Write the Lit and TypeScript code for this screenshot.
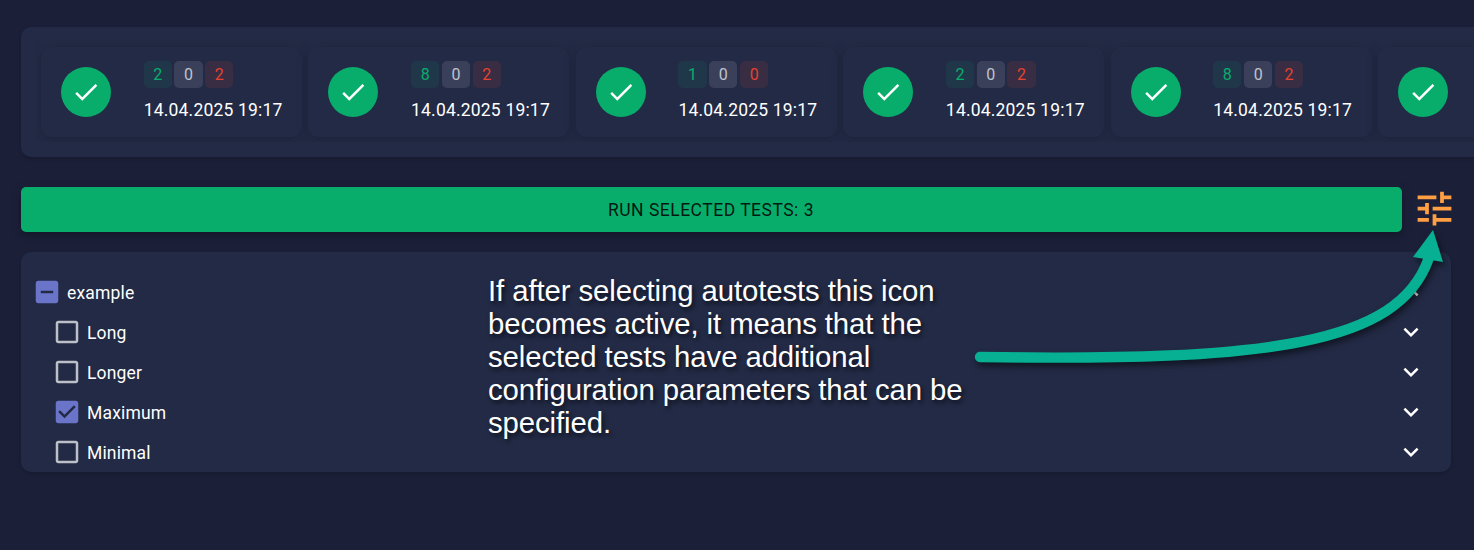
import { LitElement, html, css, svg, nothing } from "lit";
import { customElement, property } from "lit/decorators.js";

const runs: number[][] = [
  [2, 0, 2],
  [8, 0, 2],
  [1, 0, 0],
  [2, 0, 2],
  [8, 0, 2],
  [],
];
const DATE = "14.04.2025 19:17";

const ICONS = {
  done: "M9 16.17 4.83 12l-1.42 1.41L9 19 21 7l-1.41-1.41z",
  tune: "M3 17v2h6v-2H3zM3 5v2h10V5H3zm10 16v-2h8v-2h-8v-2h-2v6h2zM7 9v2H3v2h4v2h2V9H7zm14 4v-2H11v2h10zm-6-4h2V7h4V5h-4V3h-2v6z",
  more: "M16.59 8.59 12 13.17 7.41 8.59 6 10l6 6 6-6z",
  less: "m12 8-6 6 1.41 1.41L12 10.83l4.59 4.58L18 14z",
  empty: "M19 5v14H5V5h14m0-2H5c-1.1 0-2 .9-2 2v14c0 1.1.9 2 2 2h14c1.1 0 2-.9 2-2V5c0-1.1-.9-2-2-2z",
  checked: "M19 3H5c-1.11 0-2 .9-2 2v14c0 1.1.89 2 2 2h14c1.11 0 2-.9 2-2V5c0-1.1-.89-2-2-2zm-9 14l-5-5 1.41-1.41L10 14.17l7.59-7.59L19 8l-9 9z",
  mixed: "M19 3H5c-1.1 0-2 .9-2 2v14c0 1.1.9 2 2 2h14c1.1 0 2-.9 2-2V5c0-1.1-.9-2-2-2zm-2 10H7v-2h10v2z",
};
const icon = (name: keyof typeof ICONS) =>
  html`<svg class="icon" viewBox="0 0 24 24">${svg`<path d=${ICONS[name]} />`}</svg>`;

@customElement("run-card")
class RunCard extends LitElement {
  @property({ attribute: false }) counts: number[] = [];
  static styles = css`
    :host {
      display: flex;
      flex: none;
      box-sizing: border-box;
      width: 261px;
      height: 90px;
      padding: 0 15px 0 20px;
      align-items: center;
      gap: 32.7px;
      border-radius: 10px;
      background: #222a45;
      box-shadow: 0 4px 6px rgba(0, 0, 0, 0.05), 0 1px 15px rgba(0, 0, 0, 0.08);
    }
    .status {
      display: grid;
      flex: none;
      place-items: center;
      width: 50px;
      height: 50px;
      border-radius: 50%;
      background: #08ad6c;
    }
    .icon {
      display: block;
      width: 30px;
      height: 30px;
      fill: #fff;
    }
    .info {
      display: flex;
      flex-direction: column;
      gap: 10px;
      padding-bottom: 1px;
    }
    .tags {
      display: flex;
      gap: 2.6px;
    }
    .tag {
      width: 28.2px;
      height: 27px;
      border-radius: 5px;
      text-align: center;
      font-size: 16px;
      line-height: 28px;
    }
    .ok {
      color: #08ad6c;
      background: #20374a;
    }
    .skip {
      color: #c0c3cd;
      background: #3b405a;
    }
    .fail {
      color: #e5432f;
      background: #382d43;
    }
    .date {
      font-size: 17.5px;
      line-height: 25px;
      letter-spacing: 0.01071em;
      white-space: nowrap;
    }
  `;
  render() {
    const [ok, skip, fail] = this.counts;
    return html`
      <div class="status">${icon("done")}</div>
      ${this.counts.length
        ? html`<div class="info">
            <div class="tags">
              <span class="tag ok">${ok}</span>
              <span class="tag skip">${skip}</span>
              <span class="tag fail">${fail}</span>
            </div>
            <div class="date">${DATE}</div>
          </div>`
        : nothing}
    `;
  }
}

@customElement("tree-row")
class TreeRow extends LitElement {
  @property() state: "empty" | "checked" | "mixed" = "empty";
  @property() label = "";
  @property({ type: Boolean }) expanded = false;
  static styles = css`
    :host {
      display: flex;
      align-items: center;
      height: 40px;
      font-size: 17.5px;
    }
    .icon {
      display: block;
      width: 30px;
      height: 30px;
      fill: currentColor;
    }
    .box {
      color: #bdc0c9;
    }
    .box.on {
      color: #6a75c9;
    }
    .label {
      flex: 1;
      padding: 2px 0 0 5px;
      letter-spacing: 0.00938em;
    }
  `;
  render() {
    return html`
      <span class="box ${this.state === "empty" ? "" : "on"}">${icon(this.state)}</span>
      <span class="label">${this.label}</span>
      <span>${icon(this.expanded ? "less" : "more")}</span>
    `;
  }
}

@customElement("app-root")
class AppRoot extends LitElement {
  static styles = css`
    :host {
      display: flex;
      flex-direction: column;
      position: relative;
      box-sizing: border-box;
      height: 550px;
      padding: 27px 0 0 21px;
      overflow: hidden;
      background: #1b1f38;
      color: #fff;
      font-family: Roboto, sans-serif;
    }
    .history {
      box-sizing: border-box;
      height: 130px;
      padding: 15px 0 15px 15px;
      border-radius: 10px 0 0 10px;
      background: #222a45;
      box-shadow: 0 2px 4px rgba(0, 0, 0, 0.15);
    }
    .strip {
      display: flex;
      gap: 6.4px;
      padding: 5px;
      overflow: hidden;
    }
    .actions {
      display: flex;
      align-items: center;
      gap: 9.5px;
      margin-top: 30px;
      height: 45px;
    }
    .run {
      width: 1381px;
      height: 45px;
      padding: 0 1px 0 0;
      border: 0;
      border-radius: 5px;
      background: #08ad6c;
      color: rgba(0, 0, 0, 0.87);
      font: 400 17.5px Roboto, sans-serif;
      letter-spacing: 0.02857em;
      box-shadow: 0 4px 5px rgba(0, 0, 0, 0.14), 0 2px 12px rgba(0, 0, 0, 0.12);
    }
    .tune {
      padding-bottom: 1.5px;
    }
    .tune .icon {
      display: block;
      width: 45px;
      height: 45px;
      fill: #ff9e43;
    }
    .tree {
      box-sizing: border-box;
      width: 1430px;
      height: 220px;
      margin-top: 20px;
      padding: 20px 25px 0 11px;
      border-radius: 10px;
      background: #222a45;
      box-shadow: 0 2px 4px rgba(0, 0, 0, 0.15);
    }
    .children {
      padding-left: 20px;
    }
    .note {
      position: absolute;
      left: 488px;
      top: 274px;
      margin: 0;
      font: 29.33px/33px "Liberation Sans", Arial, sans-serif;
      letter-spacing: -0.09px;
      white-space: nowrap;
      text-shadow: 2px 3px 4px rgba(0, 0, 0, 0.6);
    }
    .arrow {
      position: absolute;
      left: 960px;
      top: 220px;
      width: 514px;
      height: 170px;
      filter: drop-shadow(2px 4px 3px rgba(0, 0, 0, 0.5));
    }
    .shaft {
      fill: none;
      stroke: #07b092;
      stroke-width: 10.4;
      stroke-linecap: round;
    }
    .head {
      fill: #07b092;
    }
  `;
  render() {
    return html`
      <section class="history">
        <div class="strip">${runs.map((r) => html`<run-card .counts=${r}></run-card>`)}</div>
      </section>
      <div class="actions">
        <button class="run">RUN SELECTED TESTS: 3</button>
        <span class="tune">${icon("tune")}</span>
      </div>
      <section class="tree">
        <tree-row state="mixed" label="example" expanded></tree-row>
        <div class="children">
          <tree-row label="Long"></tree-row>
          <tree-row label="Longer"></tree-row>
          <tree-row state="checked" label="Maximum"></tree-row>
          <tree-row label="Minimal"></tree-row>
        </div>
      </section>
      <p class="note">
        If after selecting autotests this icon<br />becomes active, it means that the<br />selected tests have additional<br />configuration parameters that can be<br />specified.
      </p>
      <svg class="arrow" viewBox="960 220 514 170">
        <path class="shaft" d="M980 357C1270 361.500 1398 344 1428.500 259" />
        <path class="head" d="M1433 230 1413 257 1443 262z" />
      </svg>
    `;
  }
}
